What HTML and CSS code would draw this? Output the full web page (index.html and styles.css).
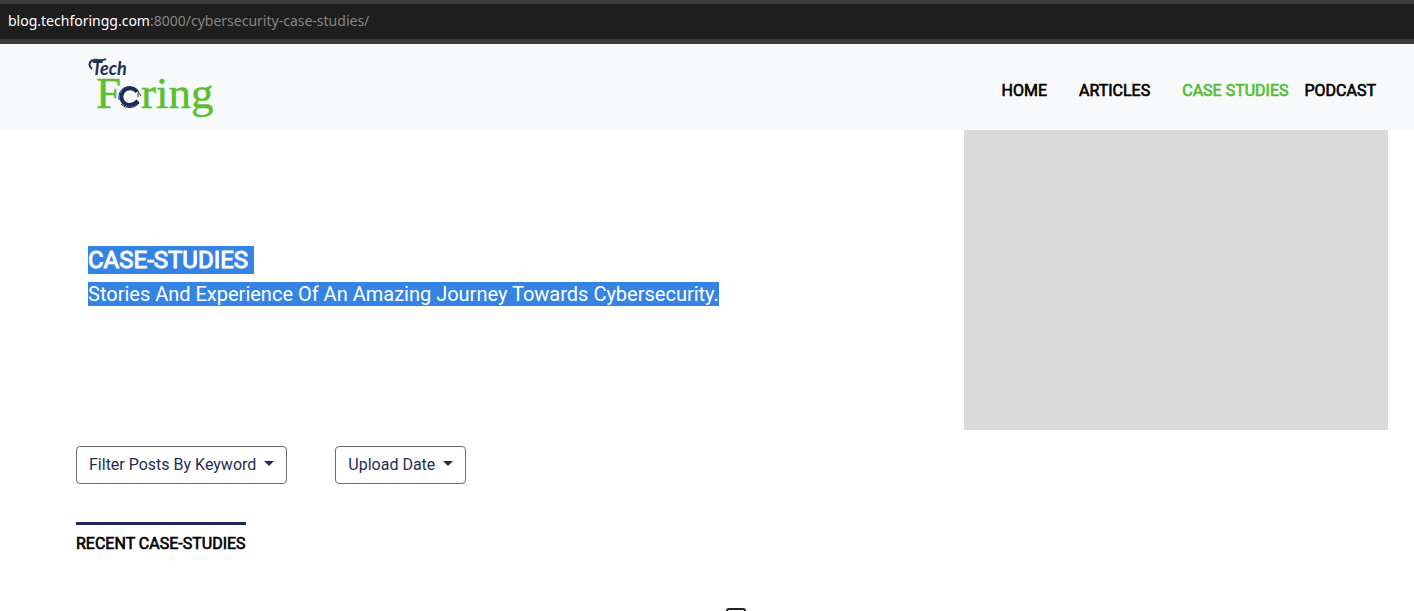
FILE: index.html
```html
<!DOCTYPE html>
<html lang="en">
<head>
<meta charset="utf-8">
<meta name="viewport" content="width=device-width, initial-scale=1">
<title>Case Studies - TechForing</title>
<link rel="stylesheet" href="styles.css">
</head>
<body>
<div class="address-bar"><span class="host">blog.techforingg.com</span>:8000/cybersecurity-case-studies/</div>
<header class="site-header">
  <a class="logo" href="#" aria-label="TechForing">
    <svg width="128" height="64" viewBox="0 0 128 64">
      <path class="swash" d="M4 13C0 10 1 5 6 4C10 3 13 6 18 3"/>
      <text class="logo-tech" x="4" y="19">Tech</text>
      <text class="logo-name" x="8" y="52">F</text>
      <path class="ring" d="M49 36C46 31 38 31 35 36C31 42 35 49 42 49C46 49 48 47 50 45"/>
      <path class="ring-edge" d="M31 44C30 35 35 30 43 31M49 34L53 40M50 41L50 37M33 48C38 53 46 53 51 47"/>
      <text class="logo-name" x="53" y="52">ring</text>
    </svg>
  </a>
  <nav class="menu">
    <a href="#">HOME</a>
    <a href="#">ARTICLES</a>
    <a class="active last-pair" href="#">CASE STUDIES</a>
    <a href="#">PODCAST</a>
  </nav>
</header>
<main>
  <section class="hero">
    <div class="hero-text">
      <h1><span class="selected">CASE-STUDIES&nbsp;</span></h1>
      <p><span class="selected">Stories And Experience Of An Amazing Journey Towards Cybersecurity.</span></p>
    </div>
    <div class="hero-image"></div>
  </section>
  <section class="posts">
    <div class="filters">
      <button class="dropdown" type="button">Filter Posts By Keyword<span class="caret"></span></button>
      <button class="dropdown" type="button">Upload Date<span class="caret"></span></button>
    </div>
    <h2>RECENT CASE-STUDIES</h2>
  </section>
  <div class="box-row"><span class="box"></span></div>
</main>
</body>
</html>
```
FILE: styles.css
```css
* { box-sizing: border-box; }
html { overflow: hidden; }
body {
  margin: 0;
  background: #fff;
  color: #000;
  font: 16px/24px Roboto, "Liberation Sans", sans-serif;
}
h1, h2, p { margin: 0; }
a { color: inherit; text-decoration: none; }

.address-bar {
  padding: 5px 8px 6px;
  border-top: 4px solid #3b3b3b;
  border-bottom: 5px solid #3b3b3b;
  background: #1e1e1e;
  color: #868686;
  font: 14px/24px "Noto Sans", sans-serif;
}
.host { color: #fff; }

.site-header {
  display: flex;
  justify-content: space-between;
  align-items: center;
  padding: 12px 38px 10px 88px;
  background: #f8f9fb;
}
.logo svg { display: block; }
.logo-tech { font: italic bold 18px Lato, sans-serif; fill: #1d2d55; }
.logo-name { font: 45px "Liberation Serif", serif; fill: #5bbf2f; stroke: #5bbf2f; stroke-width: 0.01em; }
.swash { fill: none; stroke: #1d2d55; stroke-width: 2; }
.ring { fill: none; stroke: #1d2d55; stroke-width: 4; }
.ring-edge { fill: none; stroke: #1d2d55; stroke-width: 1; }

.menu { display: flex; gap: 32px; padding-top: 6px; }
.menu a, h1, h2 { font-weight: 400; -webkit-text-stroke: 0.04em currentColor; }
.menu .active { color: #54bd31; }
.menu .last-pair { margin-right: -16px; }

.hero {
  display: grid;
  grid-template-columns: 2fr 1fr;
  margin: 0 14px 0 56px;
}
.hero-text { align-self: center; padding: 0 0 6px 32px; }
h1 { font-size: 24px; line-height: 29px; margin-bottom: 4px; }
.hero-text p { font-size: 20px; line-height: 30px; }
.selected { background: #3584e4; color: #fff; }
.hero-image { height: 300px; margin: 0 12px; background: #dbdbdb; }

.posts { padding: 16px 76px 0; }
.filters { display: flex; gap: 48px; }
.dropdown {
  display: flex;
  align-items: center;
  gap: 8px;
  padding: 6px 12px;
  border: 1px solid #6c6c70;
  border-radius: 4px;
  background: #fff;
  color: #1f2e52;
  font: inherit;
}
.caret {
  margin-top: -4px;
  border: 5px solid transparent;
  border-top-color: #1f2e52;
  border-bottom: 0;
}
h2 {
  width: fit-content;
  margin-top: 38px;
  padding-top: 7px;
  border-top: 3px solid #1c2b55;
  font-size: 16px;
  line-height: 24px;
}
.box-row { display: flex; justify-content: center; padding: 52px 0 0 58px; }
.box { width: 20px; height: 20px; border: 2px solid #222; border-radius: 3px; }
```
